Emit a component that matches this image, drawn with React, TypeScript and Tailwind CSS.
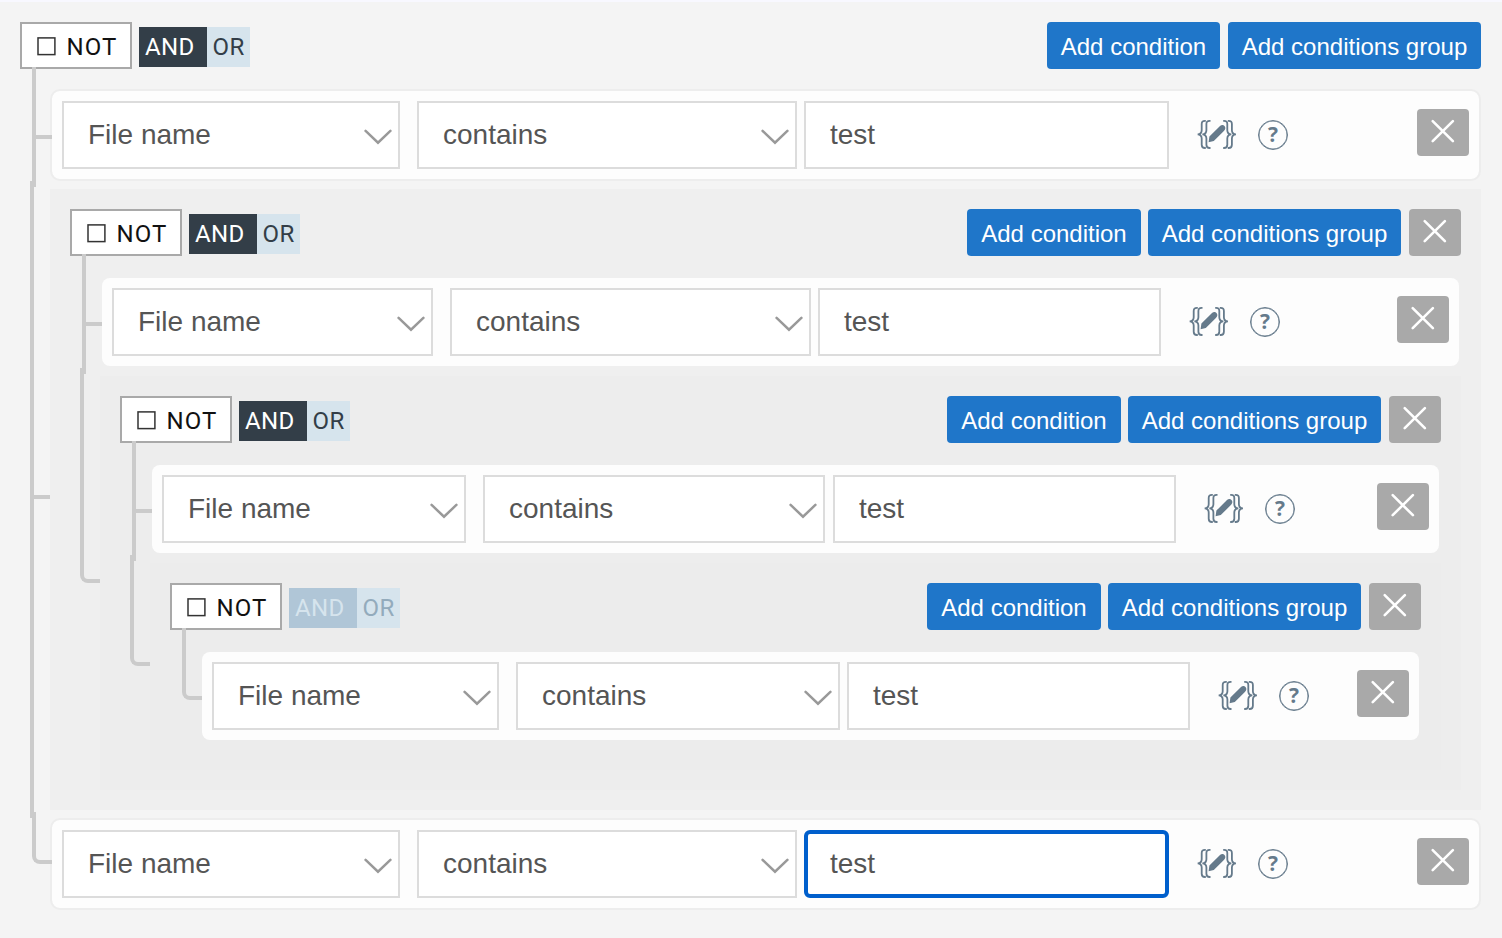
import { Fragment, type ReactNode } from "react";

function Chevron() {
  return (
    <svg width="28" height="18" viewBox="0 0 28 18" fill="none" className="mt-[3px] shrink-0">
      <path d="M1.600 2.900 14 14.700 26.400 2.900" stroke="#999" strokeWidth="2.500" strokeLinecap="round" />
    </svg>
  );
}

function Select({ label, className }: { label: string; className: string }) {
  return (
    <div
      className={`flex h-[68px] shrink-0 items-center justify-between border-2 border-[#dcdcdc] bg-white pr-[6px] pl-6 text-[28px] leading-none text-[#555] ${className}`}
    >
      <span>{label}</span>
      <Chevron />
    </div>
  );
}

function TemplateIcon() {
  const brace = "M8.800 .9H8C5.600 .9 4.700 1.900 4.700 4v6.200c0 2.400-1.200 4-4 4.200 2.800.2 4 1.800 4 4.200v6.100c0 2.200.900 3.300 3.300 3.300h.8";
  return (
    <svg width="40" height="30" viewBox="0 0 40 30" fill="none" className="shrink-0">
      <g stroke="#657a8b" strokeWidth="1.800">
        <path d={brace} />
        <path d={brace} transform="translate(4.700 0)" />
        <path d={brace} transform="translate(39.600 0) scale(-1 1)" />
        <path d={brace} transform="translate(35 0) scale(-1 1)" />
      </g>
      <path
        fill="#657a8b"
        d="M11.600 22.200l.8-5.600L22.500 6.500c1.600-1.500 3.600-2 5-.6s1 3.500-.6 5.100L16.800 21.100z"
      />
    </svg>
  );
}

function RemoveButton() {
  return (
    <button className="flex h-[47px] w-[52px] shrink-0 rounded bg-[#a9a9a9]">
      <svg width="52" height="47" viewBox="0 0 52 47" fill="none">
        <path
          d="M15.700 12.100 35.900 32.200M35.900 12.100 15.700 32.200"
          stroke="#fff"
          strokeWidth="2.600"
          strokeLinecap="round"
        />
      </svg>
    </button>
  );
}

type RowProps = {
  first?: boolean;
  last?: boolean;
  focused?: boolean;
  framed?: boolean;
  field: string;
  operator: string;
  value: string;
};

function Condition({ first, last, focused, framed, field, operator, value }: RowProps) {
  return (
    <div
      className={`relative flex h-[92px] items-start rounded-[10px] border-2 bg-[#fdfdfd] bg-clip-padding p-[10px] ${
        framed ? "border-[#ededed]" : "border-transparent"
      }`}
    >
      <span
        className={`absolute -left-[20px] w-[20px] border-b-4 border-l-4 border-[#cbcbcb] ${
          first ? "-top-[24px] h-[72px]" : "-top-[8px] h-[52px]"
        } ${last ? "rounded-bl-[8px]" : ""}`}
      />
      {!last && <span className="absolute top-[48px] -left-[20px] h-[48px] w-1 bg-[#cbcbcb]" />}
      <Select label="File name" className={field} />
      <Select label="contains" className={operator} />
      <div
        className={`flex h-[68px] shrink-0 items-center bg-white text-[28px] leading-none text-[#555] ${
          focused ? "rounded-[6px] border-4 border-[#005fcc] pl-[22px]" : "border-2 border-[#dcdcdc] pl-6"
        } ${value}`}
      >
        test
      </div>
      <div className="ml-7 flex items-center gap-[21px] pt-[19px]">
        <TemplateIcon />
        <span className="flex size-[30px] items-center justify-center rounded-full border-[1.500px] border-[#657a8b] pb-px font-['Open_Sans',sans-serif] text-[21px] leading-none font-bold text-[#657a8b] shadow-[inset_0_0_0_0.500px_#657a8b]">
          ?
        </span>
      </div>
      <div className="ml-auto pt-2">
        <RemoveButton />
      </div>
    </div>
  );
}

type GroupProps = {
  children: ReactNode;
  className: string;
  root?: boolean;
  last?: boolean;
  muted?: boolean;
};

function Group({ children, className, root, last, muted }: GroupProps) {
  return (
    <section className={`relative flex flex-col px-5 ${className}`}>
      {!root && (
        <Fragment>
          <span
            className={`absolute -top-2 -left-5 h-[calc(50%+7.5px)] w-5 border-b-4 border-l-4 border-[#cbcbcb] ${
              last ? "rounded-bl-[8px]" : ""
            }`}
          />
          {!last && <span className="absolute top-[49%] -bottom-2 -left-5 w-1 bg-[#cbcbcb]" />}
        </Fragment>
      )}
      <header className="flex h-[47px] shrink-0 items-center">
        <div className="flex h-[47px] w-[112px] items-center gap-[11px] border-2 border-[#a9a9a9] bg-white pt-[2px] pl-[14.600px] font-[Roboto,sans-serif] text-[24px] leading-none tracking-[1.100px] text-[#111]">
          <svg width="19" height="19" viewBox="0 0 19 19" fill="none" className="shrink-0">
            <rect x="1" y="0.900" width="16.900" height="16.700" stroke="#333" strokeWidth="1.500" />
          </svg>
          NOT
        </div>
        <div className="mt-[3px] ml-[7px] flex h-10 font-[Roboto,sans-serif] text-[24px] leading-[40px] tracking-[0.3px]">
          <span className={`w-[68px] pl-[6px] ${muted ? "bg-[#b0c6d7] text-[#d6e4ed]" : "bg-[#333e48] text-white"}`}>AND</span>
          <span className={`w-[43px] bg-[#d6e4ed] pl-[5.600px] ${muted ? "text-[#93abbc]" : "text-[#333e48]"}`}>OR</span>
        </div>
        <div className="ml-auto flex items-center text-[24px] leading-none text-white">
          <button className={`h-[47px] rounded bg-[#1f76c9] pt-[2px] ${root ? "w-[173px]" : "w-[174px]"}`}>Add condition</button>
          <button className={`h-[47px] w-[253px] rounded bg-[#1f76c9] pt-[2px] ${root ? "ml-2" : "ml-[7px] mr-2"}`}>
            Add conditions group
          </button>
          {!root && <RemoveButton />}
        </div>
      </header>
      <div className="mt-5 ml-[30px] flex flex-col gap-2">{children}</div>
    </section>
  );
}

export default function App() {
  return (
    <main className="h-[938px] w-full border-t-2 border-[#f8f8ff] bg-[#f4f4f4] font-['Liberation_Sans',Arial,sans-serif]">
      <Group root className="w-[1501px] pt-5">
        <Condition first framed field="w-[338px]" operator="ml-[17px] w-[380px]" value="ml-[7px] w-[365px]" />
        <Group className="bg-[#efefef] py-5">
          <Condition first field="w-[321px]" operator="ml-[17px] w-[361px]" value="ml-[7px] w-[343px]" />
          <Group last className="bg-[#ededed] py-5">
            <Condition first field="w-[304px]" operator="ml-[17px] w-[342px]" value="ml-[8px] w-[343px]" />
            <Group last muted className="bg-[#ececec] pt-5 pb-7">
              <Condition first last field="w-[287px]" operator="ml-[17px] w-[324px]" value="ml-[7px] w-[343px]" />
            </Group>
          </Group>
        </Group>
        <Condition last focused framed field="w-[338px]" operator="ml-[17px] w-[380px]" value="ml-[7px] w-[365px]" />
      </Group>
    </main>
  );
}
